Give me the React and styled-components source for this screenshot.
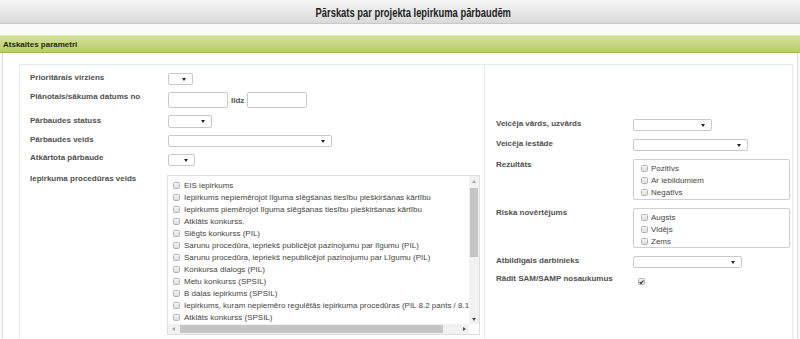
import React from "react";
import styled, { createGlobalStyle } from "styled-components";

const Global = createGlobalStyle`
  html, body { margin: 0; padding: 0; background: #fff; }
  body { font-family: "Liberation Sans", Arial, sans-serif; color: #333; }
  * { box-sizing: border-box; }
`;

const Page = styled.div`
  width: 800px;
  height: 339px;
  overflow: hidden;
  background: #fafafa;
`;

const Header = styled.header`
  height: 24px;
  background: linear-gradient(#f6f6f6, #d9d9d9);
  border-bottom: 1px solid #c9c9c9;
  display: flex;
  align-items: center;
  justify-content: center;
  padding-left: 26px;
`;

const Title = styled.h1`
  margin: 0;
  display: inline-block;
  font-size: 12.5px;
  font-weight: bold;
  color: #1e1e1e;
  padding-top: 2px;
  transform: scaleX(0.75);
  white-space: nowrap;
`;

const Section = styled.section`
  margin-top: 11px;
`;

const SectionBar = styled.div`
  height: 18px;
  background: linear-gradient(#d3e197, #b8cb6d);
  border-top: 1px solid #e2ecb9;
  border-bottom: 1px solid #a2b756;
  display: flex;
  align-items: center;
  padding-left: 3px;
  font-size: 8px;
  font-weight: bold;
  color: #1f2a0a;
`;

const SectionBody = styled.div`
  background: #fff;
  margin: 0 2px;
  border-left: 1px solid #dcdcdc;
  border-right: 1px solid #dcdcdc;
  padding: 11px 3px 0 16px;
  height: 300px;
`;

const Panels = styled.div`
  display: grid;
  grid-template-columns: 466px 308px;
  height: 100%;
`;

const Panel = styled.div`
  border: 1px solid #e5eaf0;
  border-left-width: ${(p) => (p.$joined ? 0 : 1)}px;
  border-bottom: 0;
  padding: ${(p) => p.$pt}px 0 0 ${(p) => p.$pl}px;
`;

const FormGrid = styled.div`
  display: grid;
  grid-template-columns: ${(p) => p.$label}px auto;
  row-gap: ${(p) => p.$gap}px;
  align-items: start;
`;

const Label = styled.div`
  font-size: 8px;
  font-weight: bold;
  color: #505050;
  line-height: 9px;
  padding-top: ${(p) => p.$pt ?? 0}px;
  margin-top: ${(p) => p.$mt ?? 0}px;
  white-space: nowrap;
`;

const SelectBox = styled.div`
  width: ${(p) => p.$w}px;
  height: ${(p) => p.$h ?? 12}px;
  border: 1px solid #c9c9c9;
  border-radius: 2px;
  background: #fff;
  display: flex;
  align-items: center;
  justify-content: flex-end;
  padding-right: 6px;
`;

const Arrow = ({ color = "#222", dir = "down" }) => {
  const d = {
    down: "M0 0 H4 L2 3 Z",
    up: "M0 3 H4 L2 0 Z",
  }[dir];
  return (
    <svg width="4" height="3" viewBox="0 0 4 3">
      <path d={d} fill={color} />
    </svg>
  );
};

const SideArrow = ({ color = "#222", dir = "right" }) => (
  <svg width="3" height="4" viewBox="0 0 3 4">
    <path d={dir === "right" ? "M0 0 V4 L3 2 Z" : "M3 0 V4 L0 2 Z"} fill={color} />
  </svg>
);

const Select = ({ w, h }) => (
  <SelectBox $w={w} $h={h}>
    <Arrow />
  </SelectBox>
);

const DateRow = styled.div`
  display: flex;
  align-items: center;
  gap: 3px;
  font-size: 8px;
  font-weight: bold;
  color: #505050;
`;

const DateInput = styled.input`
  width: 60px;
  height: 16px;
  border: 1px solid #c9c9c9;
  border-radius: 2px;
  padding: 0;
  margin: 0;
  background: #fff;
`;

const ListBox = styled.div`
  width: 313px;
  height: 160px;
  margin-left: -1px;
  margin-top: 2px;
  border: 1px solid #dedede;
  background: #fff;
  display: grid;
  grid-template-columns: 1fr 10px;
  grid-template-rows: 1fr 10px;
`;

const ListContent = styled.div`
  overflow: hidden;
  padding: 3px 0 0 5px;
`;

const VBar = styled.div`
  background: #f1f1f1;
  display: flex;
  flex-direction: column;
`;

const HBar = styled.div`
  background: #f1f1f1;
  display: flex;
`;

const Corner = styled.div`
  background: #fff;
`;

const ScrollBtn = styled.div`
  flex: none;
  width: 10px;
  height: 10px;
  display: flex;
  align-items: center;
  justify-content: center;
`;

const VTrack = styled.div`
  flex: 1;
  padding-top: ${(p) => p.$offset}px;
`;

const VThumb = styled.div`
  width: 8px;
  margin: 0 auto;
  height: ${(p) => p.$size}px;
  background: #c5c5c5;
`;

const HTrack = styled.div`
  flex: 1;
  display: flex;
  align-items: center;
  padding-left: ${(p) => p.$offset}px;
`;

const HThumb = styled.div`
  height: 8px;
  width: ${(p) => p.$size}px;
  background: #c5c5c5;
`;

const Item = styled.div`
  display: flex;
  align-items: center;
  gap: 4px;
  height: 12px;
  font-size: 8px;
  color: #454545;
  white-space: nowrap;
`;

const CheckSquare = styled.span`
  flex: none;
  width: 7px;
  height: 7px;
  border: 1px solid #b4b4b4;
  border-radius: 1.5px;
  background: linear-gradient(#f4f4f4, #dedede);
  display: inline-flex;
  align-items: center;
  justify-content: center;
`;

const Check = ({ checked }) => (
  <CheckSquare>
    {checked && (
      <svg width="6" height="6" viewBox="0 0 6 6">
        <path d="M0.8 3.1 L2.4 4.7 L5.3 1.2" fill="none" stroke="#222" strokeWidth="1.3" />
      </svg>
    )}
  </CheckSquare>
);

const OptionBox = styled.div`
  width: 157px;
  height: ${(p) => p.$h}px;
  border: 1px solid #cfcfcf;
  border-radius: 2px;
  padding: 2px 0 0 7px;
`;

const OptionItem = styled(Item)`
  height: 12.3px;
  gap: 3px;
`;

const SingleCheck = styled.div`
  display: flex;
  padding: 2px 0 0 5px;
`;

const procedures = [
  "EIS iepirkums",
  "Iepirkums nepiemērojot līguma slēgšanas tiesību piešķiršanas kārtību",
  "Iepirkums piemērojot līguma slēgšanas tiesību piešķiršanas kārtību",
  "Atklāts konkurss.",
  "Slēgts konkurss (PIL)",
  "Sarunu procedūra, iepriekš publicējot paziņojumu par līgumu (PIL)",
  "Sarunu procedūra, iepriekš nepublicējot paziņojumu par Līgumu (PIL)",
  "Konkursa dialogs (PIL)",
  "Metu konkurss (SPSIL)",
  "B daļas iepirkums (SPSIL)",
  "Iepirkums, kuram nepiemēro regulētās iepirkuma procedūras (PIL 8.2 pants / 8.1 pants)",
  "Atklāts konkurss (SPSIL)",
];

export default function App() {
  return (
    <Page>
      <Global />
      <Header>
        <Title>Pārskats par projekta Iepirkuma pārbaudēm</Title>
      </Header>
      <Section>
        <SectionBar>Atskaites parametri</SectionBar>
        <SectionBody>
          <Panels>
            <Panel $pt={8} $pl={10}>
              <FormGrid $label={138} $gap={7}>
                <Label $pt={0}>Prioritārais virziens</Label>
                <Select w={25} />
                <Label $pt={0}>Plānotais/sākuma datums no</Label>
                <DateRow>
                  <DateInput />
                  <span>līdz</span>
                  <DateInput />
                </DateRow>
                <Label $pt={1}>Pārbaudes statuss</Label>
                <Select w={44} h={13} />
                <Label $pt={0}>Pārbaudes veids</Label>
                <Select w={164} />
                <Label $mt={-1}>Atkārtota pārbaude</Label>
                <Select w={27} />
                <Label $pt={1}>Iepirkuma procedūras veids</Label>
                <ListBox>
                  <ListContent>
                    {procedures.map((p) => (
                      <Item key={p}>
                        <Check />
                        <span>{p}</span>
                      </Item>
                    ))}
                  </ListContent>
                  <VBar>
                    <ScrollBtn>
                      <Arrow dir="up" color="#a5a5a5" />
                    </ScrollBtn>
                    <VTrack $offset={2}>
                      <VThumb $size={69} />
                    </VTrack>
                    <ScrollBtn>
                      <Arrow dir="down" color="#505050" />
                    </ScrollBtn>
                  </VBar>
                  <HBar>
                    <ScrollBtn>
                      <SideArrow dir="left" color="#a5a5a5" />
                    </ScrollBtn>
                    <HTrack $offset={2}>
                      <HThumb $size={263} />
                    </HTrack>
                    <ScrollBtn>
                      <SideArrow dir="right" color="#505050" />
                    </ScrollBtn>
                  </HBar>
                  <Corner />
                </ListBox>
              </FormGrid>
            </Panel>
            <Panel $joined $pt={54} $pl={11}>
              <FormGrid $label={137} $gap={8}>
                <Label>Veicēja vārds, uzvārds</Label>
                <Select w={79} />
                <Label>Veicēja iestāde</Label>
                <Select w={115} />
                <Label $pt={1}>Rezultāts</Label>
                <OptionBox $h={41}>
                  {["Pozitīvs", "Ar iebildumiem", "Negatīvs"].map((t) => (
                    <OptionItem key={t}>
                      <Check />
                      <span>{t}</span>
                    </OptionItem>
                  ))}
                </OptionBox>
                <Label $pt={0}>Riska novērtējums</Label>
                <OptionBox $h={40}>
                  {["Augsts", "Vidējs", "Zems"].map((t) => (
                    <OptionItem key={t}>
                      <Check />
                      <span>{t}</span>
                    </OptionItem>
                  ))}
                </OptionBox>
                <Label>Atbildīgais darbinieks</Label>
                <Select w={109} />
                <Label $mt={-2}>Rādīt SAM/SAMP nosaukumus</Label>
                <SingleCheck>
                  <Check checked />
                </SingleCheck>
              </FormGrid>
            </Panel>
          </Panels>
        </SectionBody>
      </Section>
    </Page>
  );
}
